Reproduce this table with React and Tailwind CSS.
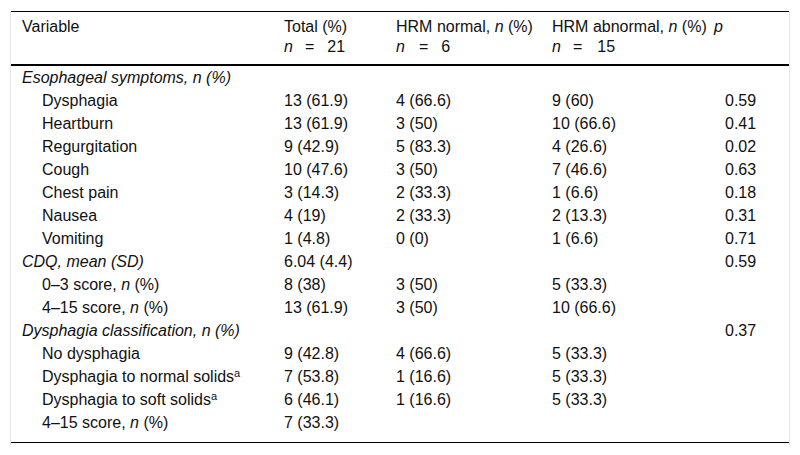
import React from "react";

const rows = [
    {label: "Esophageal symptoms, n (%)", head: true},
    {label: "Dysphagia", c: ["13 (61.9)", "4 (66.6)", "9 (60)", "0.59"]},
    {label: "Heartburn", c: ["13 (61.9)", "3 (50)", "10 (66.6)", "0.41"]},
    {label: "Regurgitation", c: ["9 (42.9)", "5 (83.3)", "4 (26.6)", "0.02"]},
    {label: "Cough", c: ["10 (47.6)", "3 (50)", "7 (46.6)", "0.63"]},
    {label: "Chest pain", c: ["3 (14.3)", "2 (33.3)", "1 (6.6)", "0.18"]},
    {label: "Nausea", c: ["4 (19)", "2 (33.3)", "2 (13.3)", "0.31"]},
    {label: "Vomiting", c: ["1 (4.8)", "0 (0)", "1 (6.6)", "0.71"]},
    {label: "CDQ, mean (SD)", head: true, c: ["6.04 (4.4)", "", "", "0.59"]},
    {label: <>0–3 score, <i>n</i> (%)</>, c: ["8 (38)", "3 (50)", "5 (33.3)", ""]},
    {label: <>4–15 score, <i>n</i> (%)</>, c: ["13 (61.9)", "3 (50)", "10 (66.6)", ""]},
    {label: "Dysphagia classification, n (%)", head: true, c: ["", "", "", "0.37"]},
    {label: "No dysphagia", c: ["9 (42.8)", "4 (66.6)", "5 (33.3)", ""]},
    {label: <>Dysphagia to normal solids<sup className="text-[11px]">a</sup></>, c: ["7 (53.8)", "1 (16.6)", "5 (33.3)", ""]},
    {label: <>Dysphagia to soft solids<sup className="text-[11px]">a</sup></>, c: ["6 (46.1)", "1 (16.6)", "5 (33.3)", ""]},
    {label: <>4–15 score, <i>n</i> (%)</>, c: ["7 (33.3)", "", "", ""]},
];

const cols = "grid grid-cols-[273px_114px_154px_167px_1fr]";

// n = x line under the column headings, the spacing differs per column
const N = ({v, a, b}) => (
    <span className="flex"><i>n</i><span className={a}>=</span><span className={b}>{v}</span></span>
);

const App = () => {
    return (
        <div className="bg-white w-[800px] h-[455px] pt-[11px] px-[10px]" style={{fontFamily: '"Liberation Sans", Arial, sans-serif'}}>
            <div className="border-x border-[#e6e6e6] h-[434px] text-[16px] text-[#111]">
                <div className={cols + " border-t border-b-2 border-black leading-5 pt-[5px] pb-[7px]"}>
                    <div className="pl-[11px]">Variable</div>
                    <div>Total (%)<N v="21" a="ml-[12px]" b="ml-[13px]" /></div>
                    <div className="-ml-[2px]">HRM normal, <i>n</i> (%)<N v="6" a="ml-[14px]" b="ml-[13px]" /></div>
                    <div>HRM abnormal, <i>n</i> (%)<N v="15" a="ml-[12px]" b="ml-[15px]" /></div>
                    <div className="-ml-[5px]"><i>p</i></div>
                </div>
                <div className="border-b border-black pb-[8px]">
                    {rows.map((r, i) => (
                        <div key={i} className={cols + " h-[23px] items-center"}>
                            <div className={r.head ? "italic pl-[11px]" : "pl-[31px]"}>{r.label}</div>
                            {(r.c || ["", "", "", ""]).map((v, j) => (
                                <div key={j} className={j === 3 ? "pl-[6px]" : j === 1 ? "-ml-[2px]" : ""}>{v}</div>
                            ))}
                        </div>
                    ))}
                </div>
            </div>
        </div>
    );
};

export default App;
